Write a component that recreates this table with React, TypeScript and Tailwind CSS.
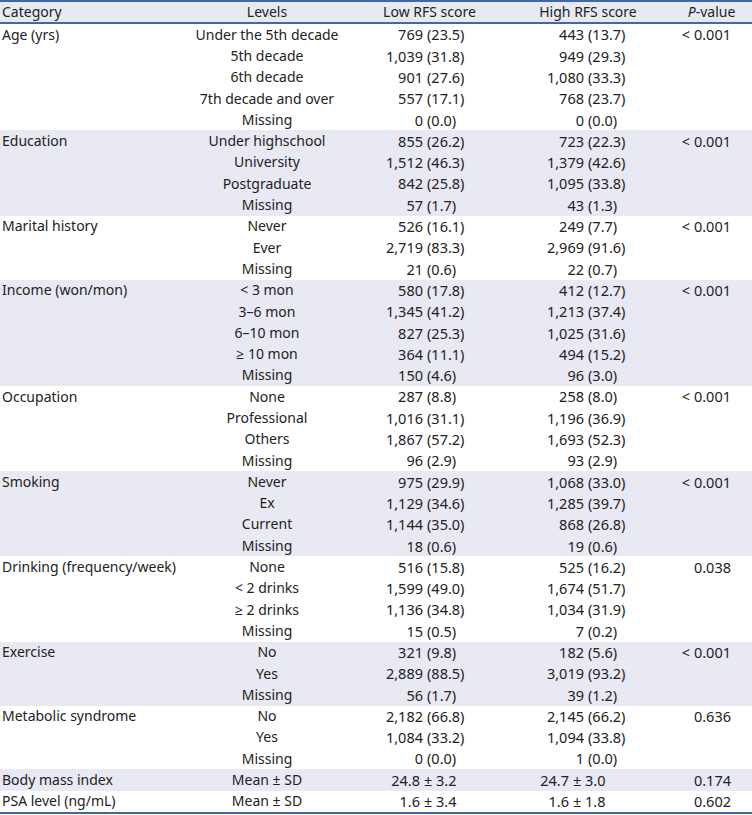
type Row = { level: string; low: [string, string]; high: [string, string]; mean?: boolean };

interface Group {
  category: string;
  p: string;
  rows: Row[];
}

const r = (level: string, low: string, high: string): Row => {
  const [la, lb] = low.split(" (");
  const [ha, hb] = high.split(" (");
  return { level, low: [la, `(${lb}`], high: [ha, `(${hb}`] };
};

const m = (low: string, high: string): Row => {
  const [la, lb] = low.split(" ± ");
  const [ha, hb] = high.split(" ± ");
  return { level: "Mean ± SD", low: [la, `± ${lb}`], high: [ha, `± ${hb}`], mean: true };
};

const groups: Group[] = [
  {
    category: "Age (yrs)",
    p: "< 0.001",
    rows: [
      r("Under the 5th decade", "769 (23.5)", "443 (13.7)"),
      r("5th decade", "1,039 (31.8)", "949 (29.3)"),
      r("6th decade", "901 (27.6)", "1,080 (33.3)"),
      r("7th decade and over", "557 (17.1)", "768 (23.7)"),
      r("Missing", "0 (0.0)", "0 (0.0)"),
    ],
  },
  {
    category: "Education",
    p: "< 0.001",
    rows: [
      r("Under highschool", "855 (26.2)", "723 (22.3)"),
      r("University", "1,512 (46.3)", "1,379 (42.6)"),
      r("Postgraduate", "842 (25.8)", "1,095 (33.8)"),
      r("Missing", "57 (1.7)", "43 (1.3)"),
    ],
  },
  {
    category: "Marital history",
    p: "< 0.001",
    rows: [
      r("Never", "526 (16.1)", "249 (7.7)"),
      r("Ever", "2,719 (83.3)", "2,969 (91.6)"),
      r("Missing", "21 (0.6)", "22 (0.7)"),
    ],
  },
  {
    category: "Income (won/mon)",
    p: "< 0.001",
    rows: [
      r("< 3 mon", "580 (17.8)", "412 (12.7)"),
      r("3–6 mon", "1,345 (41.2)", "1,213 (37.4)"),
      r("6–10 mon", "827 (25.3)", "1,025 (31.6)"),
      r("≥ 10 mon", "364 (11.1)", "494 (15.2)"),
      r("Missing", "150 (4.6)", "96 (3.0)"),
    ],
  },
  {
    category: "Occupation",
    p: "< 0.001",
    rows: [
      r("None", "287 (8.8)", "258 (8.0)"),
      r("Professional", "1,016 (31.1)", "1,196 (36.9)"),
      r("Others", "1,867 (57.2)", "1,693 (52.3)"),
      r("Missing", "96 (2.9)", "93 (2.9)"),
    ],
  },
  {
    category: "Smoking",
    p: "< 0.001",
    rows: [
      r("Never", "975 (29.9)", "1,068 (33.0)"),
      r("Ex", "1,129 (34.6)", "1,285 (39.7)"),
      r("Current", "1,144 (35.0)", "868 (26.8)"),
      r("Missing", "18 (0.6)", "19 (0.6)"),
    ],
  },
  {
    category: "Drinking (frequency/week)",
    p: "0.038",
    rows: [
      r("None", "516 (15.8)", "525 (16.2)"),
      r("< 2 drinks", "1,599 (49.0)", "1,674 (51.7)"),
      r("≥ 2 drinks", "1,136 (34.8)", "1,034 (31.9)"),
      r("Missing", "15 (0.5)", "7 (0.2)"),
    ],
  },
  {
    category: "Exercise",
    p: "< 0.001",
    rows: [
      r("No", "321 (9.8)", "182 (5.6)"),
      r("Yes", "2,889 (88.5)", "3,019 (93.2)"),
      r("Missing", "56 (1.7)", "39 (1.2)"),
    ],
  },
  {
    category: "Metabolic syndrome",
    p: "0.636",
    rows: [
      r("No", "2,182 (66.8)", "2,145 (66.2)"),
      r("Yes", "1,084 (33.2)", "1,094 (33.8)"),
      r("Missing", "0 (0.0)", "1 (0.0)"),
    ],
  },
  { category: "Body mass index", p: "0.174", rows: [m("24.8 ± 3.2", "24.7 ± 3.0")] },
  { category: "PSA level (ng/mL)", p: "0.602", rows: [m("1.6 ± 3.4", "1.6 ± 1.8")] },
];

const cols = "grid grid-cols-[180px_174px_151px_166px_81px]";

// number before the paren is right-aligned, so the "(" lines up down the column
function Split({ parts, width }: { parts: [string, string]; width: string }) {
  return (
    <div className="flex text-[14.5px]">
      <span className={`${width} text-right tabular-nums`}>{parts[0]}</span>
      <span className="pl-[4px] tabular-nums">{parts[1]}</span>
    </div>
  );
}

function GroupBlock({ group, shaded }: { group: Group; shaded: boolean }) {
  return (
    <div className={shaded ? "bg-[#e9e9f3]" : "bg-white"}>
      {group.rows.map((row, i) => (
        <div key={i} className={`${cols} h-[21.3px] items-center leading-none`}>
          <div className="pl-[2px] whitespace-nowrap">{i === 0 ? group.category : ""}</div>
          <div className="text-center whitespace-nowrap">{row.level}</div>
          <Split parts={row.low} width={row.mean ? "w-[66px]" : "w-[69px]"} />
          <Split parts={row.high} width={row.mean ? "w-[64px]" : "w-[79px]"} />
          <div className="pr-[21px] text-right text-[14.5px] tabular-nums">{i === 0 ? group.p : ""}</div>
        </div>
      ))}
    </div>
  );
}

export default function App() {
  return (
    <div
      className="w-[752px] bg-white text-[14px] text-[#222222]"
      style={{ fontFamily: '"Noto Sans", "Open Sans", sans-serif' }}
    >
      <div className={`${cols} h-[24px] items-center border-y-2 border-[#3c6aa6] bg-[#e9e9f3] leading-none`}>
        <div className="pl-[2px]">Category</div>
        <div className="text-center">Levels</div>
        <div className="text-center">Low RFS score</div>
        <div className="text-center">High RFS score</div>
        <div className="text-center">
          <i>P</i>-value
        </div>
      </div>
      {groups.map((g, i) => (
        <GroupBlock key={g.category} group={g} shaded={i % 2 === 1} />
      ))}
      <div className="border-t-2 border-[#3c6aa6]" />
    </div>
  );
}
